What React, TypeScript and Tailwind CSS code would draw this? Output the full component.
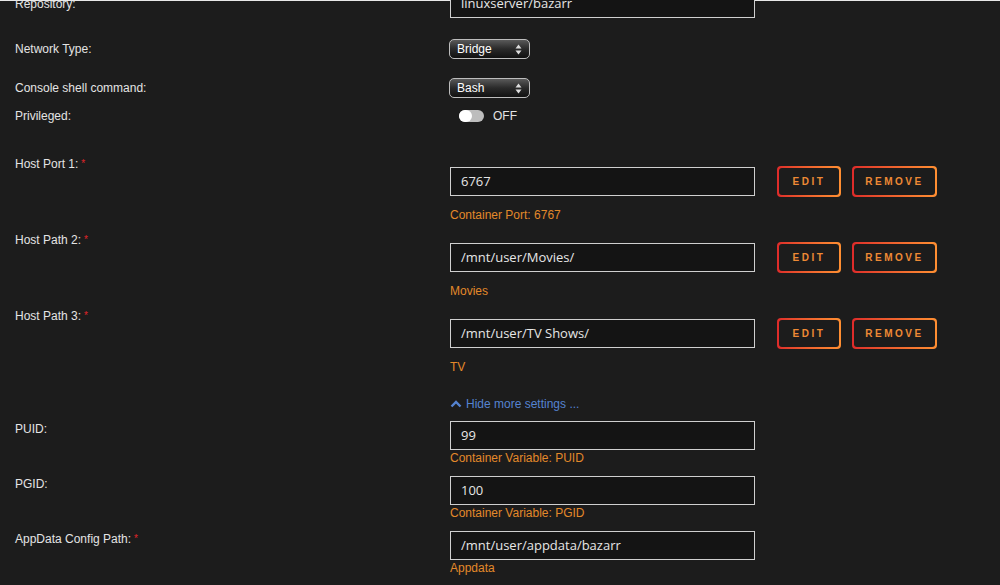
import React from "react";

const font = { fontFamily: '"Liberation Sans", Arial, sans-serif' };

const Label = ({ text, required }: { text: string; required?: boolean }) => (
  <div className="w-[435px] shrink-0 text-[12px] leading-4 text-[#e4e4e4]">
    {text}
    {required && <span className="ml-[3px] align-top text-[10px] text-[#e0242a]">*</span>}
  </div>
);

const TextBox = ({ value }: { value: string }) => (
  <div className="flex h-[29px] w-[305px] items-center border border-[#cfcfcf] bg-[#141414] pl-[10px] font-['Open_Sans',sans-serif] text-[13px] text-[#e6e6e6]">
    {value}
  </div>
);

const Desc = ({ text }: { text: string }) => (
  <div className="text-[12px] leading-4 text-[#e3892a]">{text}</div>
);

const GradButton = ({ text, w }: { text: string; w: string }) => (
  <div className={`rounded-[4px] bg-gradient-to-r from-[#de2a2a] to-[#ff8f32] p-[2px] ${w}`}>
    <div className="flex h-[27px] items-center justify-center rounded-[3px] bg-[#1c1c1c] text-[10px] font-bold tracking-[2.5px] text-[#ee8a35]">
      {text}
    </div>
  </div>
);

const Select = ({ value }: { value: string }) => (
  <div className="flex h-[20px] w-[81px] items-center justify-between rounded-[5px] border border-[#bdbdbd] bg-gradient-to-b from-[#5a5a5a] via-[#2a2a2a] to-[#111] px-[7px] text-[12px] text-white">
    <span>{value}</span>
    <svg width="7" height="11" viewBox="0 0 7 11">
      <path d="M3.5 0.5 L6.5 4.5 L0.5 4.5 Z" fill="#ddd" />
      <path d="M3.5 10.5 L6.5 6.5 L0.5 6.5 Z" fill="#ddd" />
    </svg>
  </div>
);

const PathRow = ({ label, value, desc }: { label: string; value: string; desc: string }) => (
  <div className="flex h-[76px]">
    <Label text={label} required />
    <div className="pt-[10px]">
      <div className="flex items-center">
        <TextBox value={value} />
        <div className="ml-[22px] flex gap-[11px]">
          <GradButton text="EDIT" w="w-[64px]" />
          <GradButton text="REMOVE" w="w-[85px]" />
        </div>
      </div>
      <div className="mt-[10px]">
        <Desc text={desc} />
      </div>
    </div>
  </div>
);

const VarRow = ({ label, value, desc, required }: { label: string; value: string; desc: string; required?: boolean }) => (
  <div className="flex h-[55px]">
    <Label text={label} required={required} />
    <div>
      <TextBox value={value} />
      <Desc text={desc} />
    </div>
  </div>
);

export default function App() {
  return (
    <div className="h-[585px] w-[1000px] overflow-hidden bg-[#1c1c1c]" style={font}>
      <div className="h-px bg-[#e8e8e8]" />
      <div className="pl-[15px]">
        <div className="-mt-[12px] flex h-[29px] items-center">
          <Label text="Repository:" />
          <TextBox value="linuxserver/bazarr" />
        </div>
        <div className="mt-[21px] flex h-[20px] items-center">
          <Label text="Network Type:" />
          <div className="-ml-px"><Select value="Bridge" /></div>
        </div>
        <div className="mt-[19px] flex h-[20px] items-center">
          <Label text="Console shell command:" />
          <div className="-ml-px"><Select value="Bash" /></div>
        </div>
        <div className="mt-[10px] flex h-[16px] items-center">
          <Label text="Privileged:" />
          <div className="ml-[9px] flex items-center">
            <div className="flex h-[12px] w-[25px] items-center rounded-full bg-[#bdbdbd]">
              <div className="h-[12px] w-[13px] rounded-full bg-white" />
            </div>
            <span className="ml-[9px] text-[12px] text-[#e4e4e4]">OFF</span>
          </div>
        </div>
        <div className="mt-[32px]">
          <PathRow label="Host Port 1:" value="6767" desc="Container Port: 6767" />
          <PathRow label="Host Path 2:" value="/mnt/user/Movies/" desc="Movies" />
          <PathRow label="Host Path 3:" value="/mnt/user/TV Shows/" desc="TV" />
        </div>
        <div className="mt-[12px] flex">
          <div className="w-[435px] shrink-0" />
          <div className="flex items-center text-[12px] leading-4 text-[#5583d0]">
            <svg width="12" height="8" viewBox="0 0 12 8" className="mr-[4px]">
              <path d="M1.5 6.5 L6 2 L10.5 6.5" stroke="#5583d0" strokeWidth="2.4" fill="none" />
            </svg>
            Hide more settings ...
          </div>
        </div>
        <div className="mt-[9px]">
          <VarRow label="PUID:" value="99" desc="Container Variable: PUID" />
          <VarRow label="PGID:" value="100" desc="Container Variable: PGID" />
          <VarRow label="AppData Config Path:" value="/mnt/user/appdata/bazarr" desc="Appdata" required />
        </div>
      </div>
    </div>
  );
}
